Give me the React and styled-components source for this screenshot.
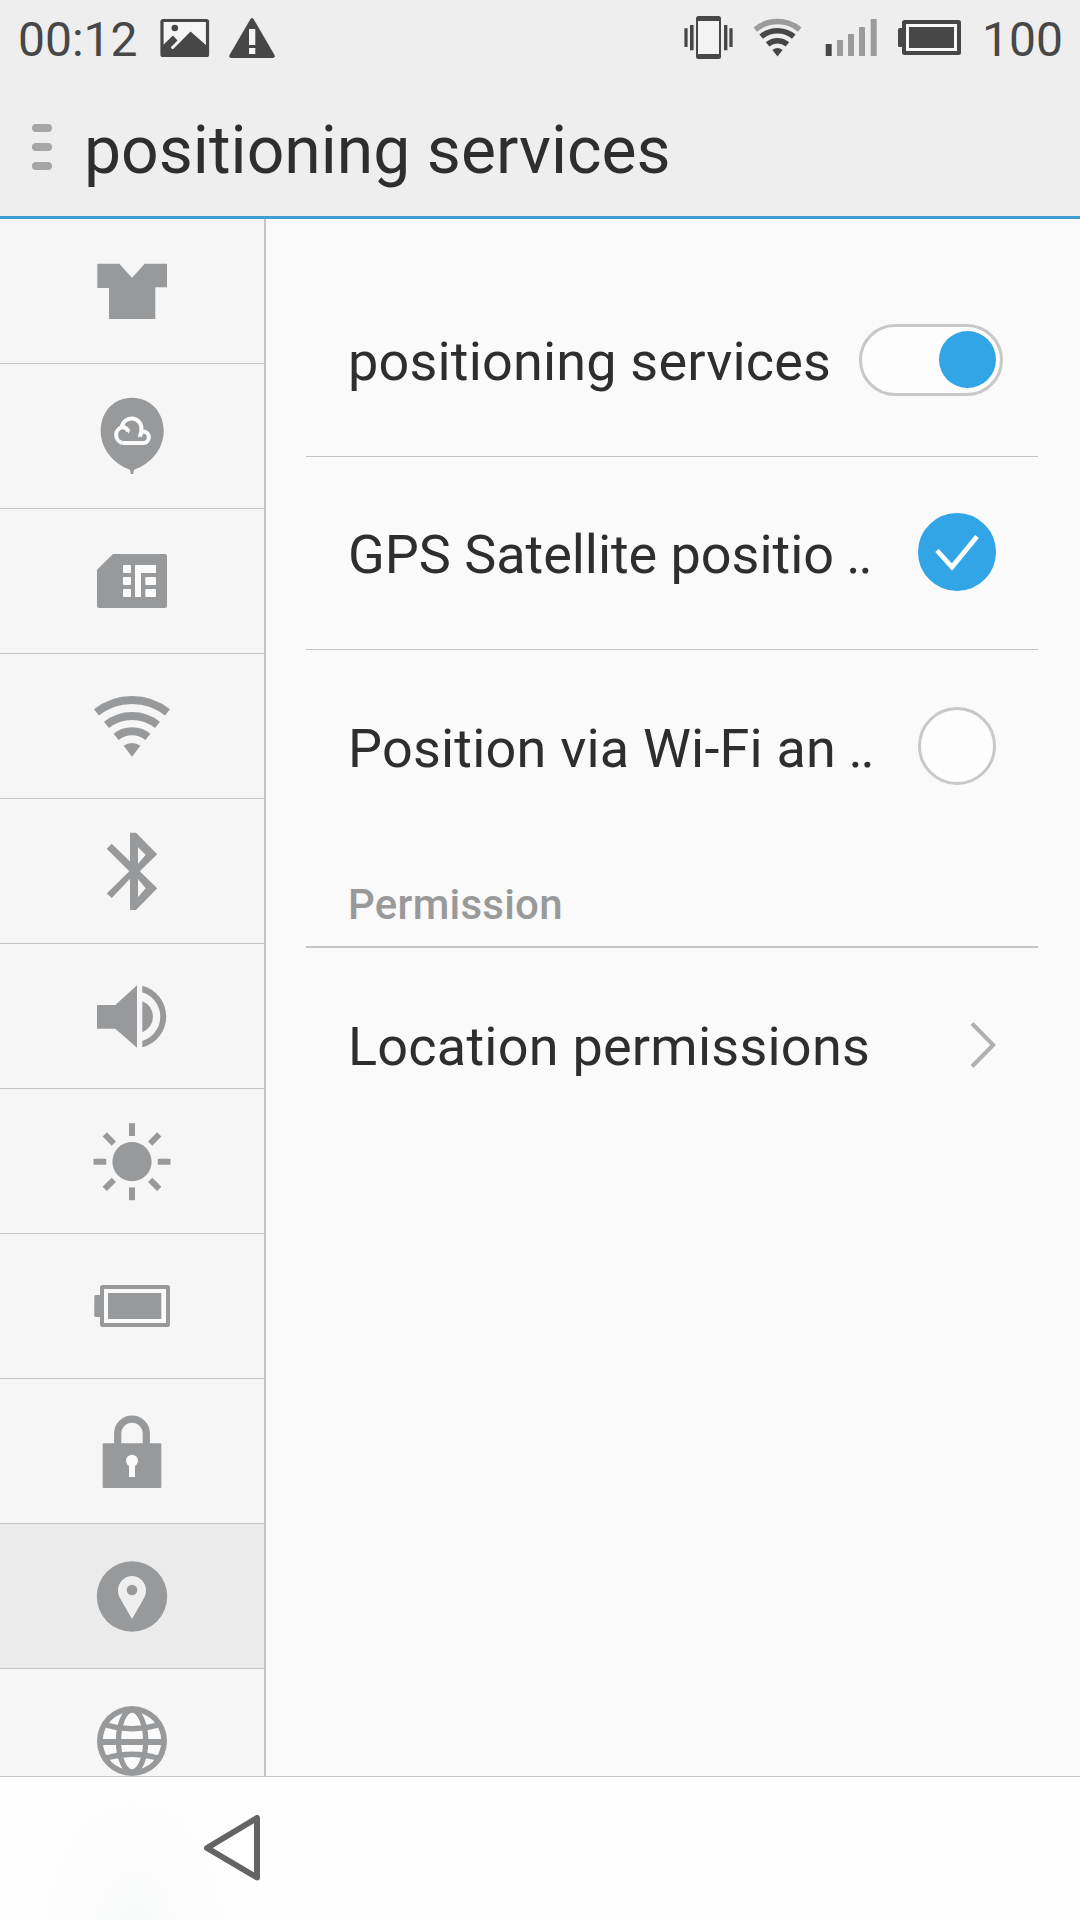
import React from 'react';
import styled, { createGlobalStyle } from 'styled-components';

const GlobalStyle = createGlobalStyle`
  body { margin: 0; background: #fafafa; }
  * { box-sizing: border-box; }
  svg { display: block; flex: none; overflow: visible; }
`;

const Screen = styled.div`
  display: flex;
  flex-direction: column;
  width: 1080px;
  height: 1920px;
  overflow: hidden;
  font-family: Roboto, 'Noto Sans', sans-serif;
  color: #2e2e2e;
`;

const Header = styled.header`
  display: flex;
  flex-direction: column;
  height: 219px;
  background: #eeeeee;
  border-bottom: 3px solid #3f9fd4;
`;

const StatusBar = styled.div`
  display: flex;
  justify-content: space-between;
  height: 78px;
  padding: 0 17px 0 18px;
`;

const StatusGroup = styled.div`
  display: flex;
  align-items: center;
  gap: ${(p) => p.$gap}px;
`;

const StatusText = styled.span`
  margin-right: ${(p) => p.$after || 0}px;
  padding-top: 2px;
  font-size: 48px;
  line-height: 56px;
  color: #474747;
  white-space: nowrap;
`;

const TitleBar = styled.div`
  display: flex;
  align-items: flex-start;
  padding-left: 32px;
`;

const MenuButton = styled.div`
  display: flex;
  flex-direction: column;
  gap: 11px;
  width: 20px;
  margin: 46px 32px 0 0;
`;

const MenuBar = styled.span`
  height: 8px;
  border-radius: 4px;
  background: #a6a6a6;
`;

const Title = styled.h1`
  margin: 34px 0 0;
  font-size: 66px;
  line-height: 78px;
  font-weight: 400;
  letter-spacing: 0.03px;
  white-space: nowrap;
`;

const Body = styled.div`
  display: flex;
  height: 1557px;
`;

const Sidebar = styled.nav`
  width: 266px;
  overflow: hidden;
  background: #f6f6f6;
  border-right: 2px solid #c4c4c4;
`;

const SideItem = styled.div`
  display: flex;
  align-items: center;
  justify-content: center;
  height: 145px;
  border-bottom: 1px solid #c4c4c4;
  color: #98999b;
  background: ${(p) => (p.$active ? '#ebebeb' : '#f6f6f6')};
`;

const Content = styled.main`
  flex: 1;
  padding: 45px 42px 0 40px;
  background: #fafafa;
`;

const Row = styled.div`
  display: flex;
  align-items: center;
  justify-content: space-between;
  height: 193px;
  padding: 0 42px;
  border-bottom: ${(p) => (p.$last ? 0 : 1)}px solid #c4c4c4;
`;

const Label = styled.span`
  padding-top: 4px;
  font-size: 54px;
  line-height: 64px;
  letter-spacing: ${(p) => p.$spacing}px;
  white-space: pre;
`;

const Ellipsis = styled.span`
  margin-left: 1px;
  letter-spacing: -2.1px;
`;

const Section = styled.div`
  height: 105px;
  padding: 37px 42px 0;
  border-bottom: 2px solid #c4c4c4;
  font-size: 42px;
  line-height: 50px;
  font-weight: 500;
  letter-spacing: 0.25px;
  color: #999999;
`;

const Toggle = styled.div`
  display: flex;
  justify-content: flex-end;
  width: 144px;
  height: 72px;
  margin-right: -7px;
  padding: 4px 4px 0 0;
  border: 3px solid #c8c8c8;
  border-radius: 36px;
  background: #fdfdfd;
`;

const Thumb = styled.span`
  width: 57px;
  height: 57px;
  border-radius: 50%;
  background: #32a5e7;
`;

const Check = styled.div`
  width: 78px;
  height: 78px;
  margin: 0 0.5px 2px 0;
  border-radius: 50%;
  border: 3px solid ${(p) => (p.$on ? '#32a5e7' : '#c8c8c8')};
  background: ${(p) => (p.$on ? '#32a5e7' : '#fdfdfd')};
`;

const NavBar = styled.footer`
  height: 144px;
  padding: 35px 0 0 200px;
  border-top: 1px solid #c4c4c4;
  background: radial-gradient(ellipse 95px 130px at 135px 144px, #f8f9f9, #fefefe) #fefefe;
`;

// One stroke of a fan centred on (cx, cy), opened by the angle with the given sine and cosine.
const fan = (cx, cy, r, s, c) =>
  `M${cx - s * r} ${cy - c * r}A${r} ${r} 0 0 1 ${cx + s * r} ${cy - c * r}`;

const Icon = ({ children }) => (
  <svg width="80" height="80" viewBox="0 0 80 80" fill="currentColor">{children}</svg>
);

const Shirt = () => (
  <Icon><path d="M5.300 12.700H27.300L40 26.700L52.700 12.700H75V36.300H63.300V68H17V37H5.300Z" /></Icon>
);

const CloudBalloon = () => (
  <Icon>
    <path d="M40 1.700C58.500 1.700 71.700 16 71.700 35C71.700 53 59 67.500 42.600 73.600C41.500 74.300 41.500 76 41.300 78H38.700C38.500 76 38.500 74.300 37.400 73.600C21.500 67.500 8.700 53 8.700 35C8.700 16 21.500 1.700 40 1.700Z" />
    <g fill="none" stroke="#fbfbfb" strokeWidth="4">
      <path d="M30.500 47A8.200 8.200 0 0 1 30.500 31Q34.500 31.300 36.500 35.500" />
      <path d="M29.800 31.100A9.800 9.800 0 0 1 49.400 33.500Q50 37 48 40.500" />
      <path d="M48.500 38Q49.500 35.500 52 35.500A5.800 5.800 0 0 1 51.500 47H30.400" />
    </g>
    <path d="M34.500 33.500L36.800 37.800L38 33Z M46.800 37L46 42L50.500 38Z" fill="#fbfbfb" />
  </Icon>
);

const Sim = () => (
  <Icon>
    <path d="M21 13H73Q75 13 75 15V65Q75 67 73 67H7Q5 67 5 65V28.700Z" />
    <g fill="#fbfbfb">
      <rect x="31" y="24" width="8" height="8" rx="1" />
      <rect x="31" y="36" width="8" height="8" rx="1" />
      <rect x="31" y="48" width="8" height="8" rx="1" />
      <path d="M43 24H64V32H49V56H43Z" />
      <rect x="53.300" y="36" width="10.700" height="8" rx="1" />
      <rect x="53.300" y="48" width="10.700" height="8" rx="1" />
    </g>
  </Icon>
);

const Wifi = () => (
  <Icon>
    <g fill="none" stroke="currentColor" strokeWidth="8">
      {[56.7, 40.7, 25.4].map((r) => <path key={r} d={fan(40, 70.7, r, 0.626, 0.78)} />)}
    </g>
    <path d={`${fan(40, 70.7, 13.8, 0.61, 0.79)}L40 70.700Z`} />
  </Icon>
);

const Bluetooth = () => (
  <Icon>
    <path
      fillRule="evenodd"
      d="M38 1.700H44L65.200 23.200L47.800 40.200L65.200 57.300L44 79H38V47.700L19.700 67L14.700 62.500L37.300 40.200L14.700 17.700L19.700 12.700L38 30.500ZM46 16.300V32.700L53.700 23.700ZM46 48V66.300L53.700 57.300Z"
    />
  </Icon>
);

const Sound = () => (
  <Icon>
    <path d="M5 29H23.300L45 9.300V71.700L23.300 52.700H5Z" />
    <path d="M50.300 25.200A16.600 16.600 0 0 1 50.300 56.200Z" />
    <path d="M50.300 9.700A31.800 31.800 0 0 1 50.300 71.300V65A25.500 25.500 0 0 0 50.300 16.300Z" />
  </Icon>
);

const Sun = () => (
  <Icon>
    <circle cx="40" cy="40.700" r="19.600" />
    {[0, 45, 90, 135, 180, 225, 270, 315].map((a) => (
      <rect key={a} x="37" y="2.200" width="6" height="12.800" transform={`rotate(${a} 40 40.7)`} />
    ))}
  </Icon>
);

const Battery = () => (
  <Icon>
    <rect x="2.300" y="29" width="8" height="22" rx="1.500" />
    <rect x="10" y="21" width="66" height="38" rx="0.500" fill="#fbfbfb" stroke="currentColor" strokeWidth="4" />
    <rect x="16" y="27" width="53.300" height="26" />
  </Icon>
);

const Lock = () => (
  <Icon>
    <path d="M25.700 34V22.500A14.300 14.300 0 0 1 54.300 22.500V34" fill="none" stroke="currentColor" strokeWidth="7.200" />
    <rect x="10.700" y="32.300" width="58.600" height="44.700" rx="1" />
    <circle cx="40" cy="49.700" r="6" fill="#fbfbfb" />
    <rect x="37" y="52" width="6" height="14" fill="#fbfbfb" />
  </Icon>
);

const Place = () => (
  <Icon>
    <circle cx="40" cy="40.500" r="35.200" />
    <path d="M40 63L28.500 43C27 40.500 26 38 26 34.500A14 14.500 0 0 1 54 34.500C54 38 53 40.500 51.500 43Z" fill="#efefef" />
    <circle cx="40" cy="34" r="5.300" />
  </Icon>
);

const Globe = () => (
  <Icon>
    <circle cx="40" cy="40" r="35" fill="currentColor" />
    <circle cx="40" cy="40" r="29.300" fill="#fbfbfb" />
    <g fill="none" stroke="currentColor" strokeWidth="5.300">
      <ellipse cx="40.100" cy="40" rx="13.600" ry="31" />
      <path d="M8 41H72" strokeWidth="6" />
      <path d="M14 24Q40 31.500 66 24M14 57Q40 49.500 66 57" />
    </g>
  </Icon>
);

const StatusIcon = ({ x, w, children }) => (
  <svg width={w} height="78" viewBox={`${x} 0 ${w} 78`} fill="#474747">{children}</svg>
);

const Picture = () => (
  <StatusIcon x={160} w={50}>
    <rect x="162" y="20.500" width="45.500" height="35" rx="1" fill="#f5f5f5" stroke="#474747" strokeWidth="3.200" />
    <circle cx="174.800" cy="28" r="3.300" />
    <path d="M162 46L173 35.500L177.500 40.500L171 47Q171 49.500 173.500 48.800L190.500 31.500L207 46V56H162Z" />
  </StatusIcon>
);

const Warning = () => (
  <StatusIcon x={228} w={48}>
    <path d="M250.500 19Q252 17 253.500 19L274.500 55Q275.500 58 272.500 58H231.500Q228.500 58 229.500 55Z" />
    <path d="M249 29H255.300V45H249ZM249 48H255.300V54H249Z" fill="#f5f5f5" />
  </StatusIcon>
);

const Vibrate = () => (
  <StatusIcon x={684} w={48}>
    <rect x="696" y="16" width="25" height="43" rx="2.500" />
    <rect x="698" y="21" width="21" height="33" fill="#f3f3f3" />
    <path d="M690 25H693.600V50.300H690ZM684.400 28.300H687.600V47H684.400ZM724 25H727.400V50.300H724ZM729.400 28.300H732.600V47H729.400Z" />
  </StatusIcon>
);

const StatusWifi = () => (
  <StatusIcon x={752} w={53}>
    <g fill="none" stroke="#474747" strokeWidth="5.600">
      <path d={fan(777.5, 56.2, 34.7, 0.64, 0.768)} stroke="#9b9b9b" />
      <path d={fan(777.5, 56.2, 25.5, 0.64, 0.768)} />
      <path d={fan(777.5, 56.2, 15.5, 0.64, 0.768)} />
    </g>
    <path d={`${fan(777.5, 56.5, 8.5, 0.6, 0.768)}L777.5 56.500Z`} />
  </StatusIcon>
);

const Signal = () => (
  <StatusIcon x={825} w={52}>
    {[[825.7, 44], [837, 40], [848, 34], [859, 27], [870.7, 19]].map(([x, y], i) => (
      <rect key={x} x={x} y={y} width="6" height={56 - y} rx="0.500" fill={i ? '#9b9b9b' : '#474747'} />
    ))}
  </StatusIcon>
);

const StatusBattery = () => (
  <StatusIcon x={897} w={65}>
    <rect x="898" y="28" width="6" height="19" rx="1.500" />
    <rect x="904" y="22" width="55" height="31" rx="0.500" fill="#f8f8f8" stroke="#474747" strokeWidth="4" />
    <rect x="909" y="27" width="45" height="21" />
  </StatusIcon>
);

const sideIcons = [Shirt, CloudBalloon, Sim, Wifi, Bluetooth, Sound, Sun, Battery, Lock, Place, Globe];

export default function App() {
  return (
    <Screen>
      <GlobalStyle />
      <Header>
        <StatusBar>
          <StatusGroup $gap={18}>
            <StatusText $after={4}>00:12</StatusText>
            <Picture />
            <Warning />
          </StatusGroup>
          <StatusGroup $gap={20}>
            <Vibrate />
            <StatusWifi />
            <Signal />
            <StatusBattery />
            <StatusText>100</StatusText>
          </StatusGroup>
        </StatusBar>
        <TitleBar>
          <MenuButton>
            <MenuBar />
            <MenuBar />
            <MenuBar />
          </MenuButton>
          <Title>positioning services</Title>
        </TitleBar>
      </Header>
      <Body>
        <Sidebar>
          {sideIcons.map((Glyph, i) => (
            <SideItem key={i} $active={Glyph === Place}><Glyph /></SideItem>
          ))}
        </Sidebar>
        <Content>
          <Row>
            <Label $spacing={0.18}>positioning services</Label>
            <Toggle><Thumb /></Toggle>
          </Row>
          <Row>
            <Label $spacing={-0.04}>GPS Satellite positio<Ellipsis> ..</Ellipsis></Label>
            <Check $on>
              <svg width="72" height="72" viewBox="3 3 72 72" fill="none" stroke="#fff" strokeWidth="4.800">
                <path d="M19 37.500L34 54L59 23.500" />
              </svg>
            </Check>
          </Row>
          <Row $last>
            <Label $spacing={0.2}>Position via Wi-Fi an<Ellipsis> ..</Ellipsis></Label>
            <Check />
          </Row>
          <Section>Permission</Section>
          <Row $last>
            <Label $spacing={0.23}>Location permissions</Label>
            <svg width="26" height="48" viewBox="0 0 26 48" fill="none" stroke="#b0b0b0" strokeWidth="4">
              <path d="M2 2.500L23.200 24L2 45.500" />
            </svg>
          </Row>
        </Content>
      </Body>
      <NavBar>
        <svg width="64" height="72" viewBox="200 1812 64 72" fill="#fff" stroke="#666462" strokeWidth="6" strokeLinejoin="round">
          <path d="M207 1848L257 1818V1877.500Z" />
        </svg>
      </NavBar>
    </Screen>
  );
}
